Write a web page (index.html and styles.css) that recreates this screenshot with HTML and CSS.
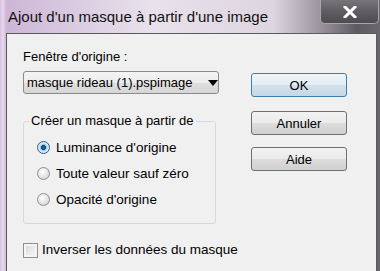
FILE: index.html
```html
<!DOCTYPE html>
<html lang="fr">
<head>
    <meta charset="UTF-8">
    <title>Ajout d'un masque à partir d'une image</title>
    <link rel="stylesheet" href="styles.css">
</head>
<body>
    <div class="window">
        <div class="titlebar">
            <span class="title">Ajout d'un masque à partir d'une image</span>
            <span class="close">
                <svg width="14" height="12" viewBox="0 0 14 12">
                    <path d="M2 1 L12 11 M12 1 L2 11" stroke="#fff" stroke-width="3" stroke-linecap="square"/>
                </svg>
            </span>
        </div>

        <div class="client">
            <div class="left-col">
                <div class="label">Fenêtre d'origine :</div>
                <div class="combo">
                    <span class="combo-text">masque rideau (1).pspimage</span>
                    <span class="combo-arrow"></span>
                </div>

                <fieldset class="group">
                    <legend>Créer un masque à partir de</legend>
                    <div class="radio-row"><span class="radio checked"></span>Luminance d'origine</div>
                    <div class="radio-row"><span class="radio"></span>Toute valeur sauf zéro</div>
                    <div class="radio-row"><span class="radio"></span>Opacité d'origine</div>
                </fieldset>

                <div class="check-row"><span class="checkbox"></span>Inverser les données du masque</div>
            </div>

            <div class="buttons">
                <button class="btn default">OK</button>
                <button class="btn cancel">Annuler</button>
                <button class="btn help">Aide</button>
            </div>
        </div>
    </div>
</body>
</html>
```

FILE: styles.css
```css
body {
    margin: 0;
    width: 380px;
    height: 271px;
    overflow: hidden;
    font-family: "Liberation Sans", Arial, sans-serif;
    font-size: 13px;
    color: #000;
}
.window {
    height: 271px;
    display: flex;
    flex-direction: column;
    background: linear-gradient(90deg, #d8bfe0 0px, #e9d9ee 3px, #cdb6d6 6px, #e8e2ec 40%, #ddd5e0 72%, #9c95a0 84%, #5e5a62 94%, #6b686d 100%);
}
.titlebar {
    height: 33px;
    display: flex;
    justify-content: space-between;
    align-items: flex-start;
    flex-shrink: 0;
}
.title {
    font-size: 15px;
    line-height: 18px;
    padding: 8px 0 0 8px;
    color: #111;
}
.close {
    width: 59px;
    height: 24px;
    margin-right: 1px;
    box-sizing: border-box;
    border: 1px solid #a9a6ab;
    border-top: none;
    border-radius: 0 0 5px 5px;
    background: linear-gradient(180deg, #77747a 0%, #5f5c62 50%, #4e4c51 100%);
    display: flex;
    align-items: center;
    justify-content: center;
}
.client {
    flex: 1;
    margin: 0 3px 0 6px;
    border: 1px solid #5a5a5a;
    border-bottom: none;
    background: #f0f0f0;
    display: flex;
    padding: 15px 0 0 16px;
}
.left-col {
    width: 196px;
    flex-shrink: 0;
}
.label {
    line-height: 16px;
}
.combo {
    margin-top: 6px;
    height: 23px;
    box-sizing: border-box;
    border: 1px solid #8a8a8a;
    border-radius: 3px;
    background: linear-gradient(180deg, #f4f4f4 0%, #ececec 50%, #dfdfdf 51%, #d6d6d6 100%);
    display: flex;
    align-items: center;
    padding-left: 3px;
}
.combo-text {
    width: 178px;
    overflow: hidden;
    white-space: nowrap;
    line-height: 16px;
}
.combo-arrow {
    margin-left: 5px;
    width: 0;
    height: 0;
    border-left: 5px solid transparent;
    border-right: 5px solid transparent;
    border-top: 6px solid #000;
}
.group {
    margin: 19px 0 0 0;
    width: 193px;
    box-sizing: border-box;
    border: 1px solid #d5d9dc;
    border-radius: 3px;
    padding: 5px 0 11px 13px;
}
.group legend {
    padding: 0 2px;
    margin-left: -8px;
    line-height: 16px;
}
.radio-row {
    height: 26px;
    display: flex;
    align-items: center;
    gap: 6px;
    white-space: nowrap;
    font-size: 13.5px;
}
.radio {
    flex-shrink: 0;
    width: 13px;
    height: 13px;
    box-sizing: border-box;
    border-radius: 50%;
    border: 1px solid #8f8f8f;
    background: radial-gradient(circle at 40% 35%, #ffffff 0%, #e8e8e8 45%, #c9c9c9 100%);
}
.radio.checked {
    border-color: #2b5f86;
    background: radial-gradient(circle at 50% 50%, #1f6aa5 0%, #0c4d80 30%, #9bc4e0 36%, #e4eef5 60%, #b9c8d3 100%);
}
.check-row {
    margin-top: 18px;
    line-height: 16px;
    display: flex;
    align-items: center;
    gap: 4px;
    white-space: nowrap;
    font-size: 13.5px;
}
.checkbox {
    flex-shrink: 0;
    width: 15px;
    height: 15px;
    box-sizing: border-box;
    border: 1px solid #8f8f8f;
    background: linear-gradient(135deg, #d4d4d4 0%, #ececec 60%, #f8f8f8 100%);
    box-shadow: inset 0 0 0 2px #f4f4f4;
}
.buttons {
    margin-left: 32px;
    display: flex;
    flex-direction: column;
}
.btn {
    width: 96px;
    height: 24px;
    font-family: "Liberation Sans", Arial, sans-serif;
    font-size: 13px;
    color: #000;
    border: 1px solid #707070;
    border-radius: 3px;
    background: linear-gradient(180deg, #f2f2f2 0%, #ebebeb 48%, #dddddd 52%, #cfcfcf 100%);
    padding: 0;
}
.btn.default {
    margin-top: 24px;
    border-color: #3c7fb1;
    background: linear-gradient(180deg, #eef5fa 0%, #e3edf4 48%, #d2e1ec 52%, #c6d8e6 100%);
}
.btn.cancel {
    margin-top: 14px;
}
.btn.help {
    margin-top: 12px;
}
```
